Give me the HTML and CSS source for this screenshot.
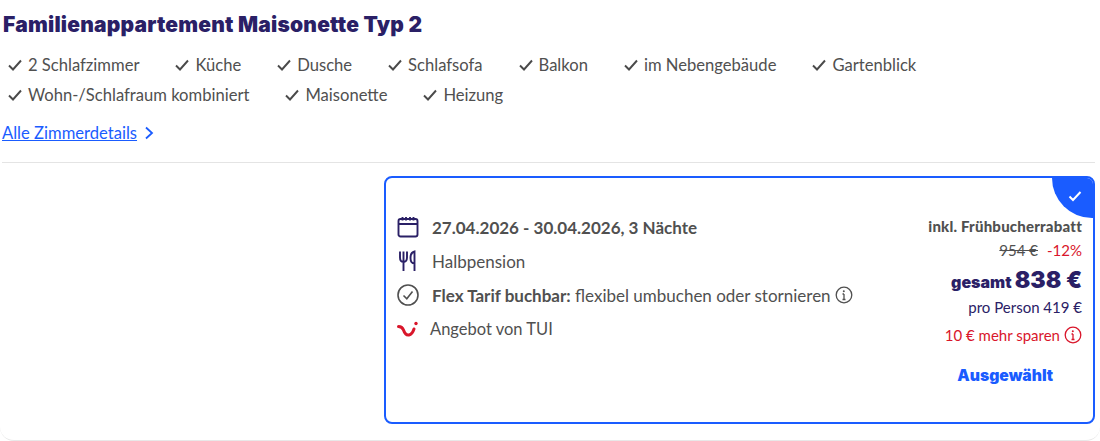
FILE: index.html
```html
<!DOCTYPE html>
<html lang="de">
<head>
  <meta charset="UTF-8" />
  <title>Familienappartement Maisonette Typ 2</title>
  <link rel="stylesheet" href="styles.css">
</head>
<body>
  <div class="room">
    <h2 class="room-title">Familienappartement Maisonette Typ 2</h2>

    <ul class="features">
      <li><svg viewBox="0 0 14 14"><path d="M1 7.500 5 11.500 13 2.500"/></svg>2 Schlafzimmer</li>
      <li><svg viewBox="0 0 14 14"><path d="M1 7.500 5 11.500 13 2.500"/></svg>Küche</li>
      <li><svg viewBox="0 0 14 14"><path d="M1 7.500 5 11.500 13 2.500"/></svg>Dusche</li>
      <li><svg viewBox="0 0 14 14"><path d="M1 7.500 5 11.500 13 2.500"/></svg>Schlafsofa</li>
      <li><svg viewBox="0 0 14 14"><path d="M1 7.500 5 11.500 13 2.500"/></svg>Balkon</li>
      <li><svg viewBox="0 0 14 14"><path d="M1 7.500 5 11.500 13 2.500"/></svg>im Nebengebäude</li>
      <li><svg viewBox="0 0 14 14"><path d="M1 7.500 5 11.500 13 2.500"/></svg>Gartenblick</li>
      <li><svg viewBox="0 0 14 14"><path d="M1 7.500 5 11.500 13 2.500"/></svg>Wohn-/Schlafraum kombiniert</li>
      <li><svg viewBox="0 0 14 14"><path d="M1 7.500 5 11.500 13 2.500"/></svg>Maisonette</li>
      <li><svg viewBox="0 0 14 14"><path d="M1 7.500 5 11.500 13 2.500"/></svg>Heizung</li>
    </ul>

    <div class="details">
      <a href="#">Alle Zimmerdetails</a>
      <svg class="chevron" viewBox="0 0 10 14"><path d="M2 1.500 8 7 2 12.500"/></svg>
    </div>

    <hr class="divider">

    <div class="offer-row">
      <div class="offer">
        <div class="corner">
          <svg viewBox="0 0 14 14"><path d="M1.500 7.500 5 11 12.500 3"/></svg>
        </div>

        <div class="offer-info">
          <div class="info-line">
            <svg class="info-icon navy" viewBox="0 0 22 22">
              <rect x="1.500" y="3" width="19" height="17.500" rx="2"/>
              <path d="M1.500 8h19M5.500 1v3.500M9 1v3.500M13 1v3.500M16.500 1v3.500"/>
            </svg>
            <strong>27.04.2026 - 30.04.2026, 3 Nächte</strong>
          </div>
          <div class="info-line">
            <svg class="info-icon navy" viewBox="0 0 22 22">
              <path d="M3 1.500v6c0 3 1.500 4.500 3.500 4.500S10 10.500 10 7.500v-6M6.500 1.500V21"/>
              <path d="M17.500 13.500c-2.500 0-4-1.500-4-5.500 0-4 1.500-6 4-6.500V21"/>
            </svg>
            <span>Halbpension</span>
          </div>
          <div class="info-line">
            <svg class="info-icon grey" viewBox="0 0 22 22">
              <circle cx="11" cy="11" r="10"/>
              <path d="M6.500 11.500 9.800 14.800 15.500 7.500"/>
            </svg>
            <span><strong>Flex Tarif buchbar:</strong> flexibel umbuchen oder stornieren</span>
            <svg class="info-dot" viewBox="0 0 18 18">
              <circle cx="9" cy="9" r="7.800"/>
              <path d="M9 8v5.500M7.500 8H9M7.500 13.500h3"/>
              <circle class="fill" cx="8.800" cy="5.200" r="1"/>
            </svg>
          </div>
          <div class="info-line tui">
            <svg class="tui-logo" viewBox="0 0 21 17">
              <path class="tui-smile" d="M1.500 5.500C4 5.500 5.500 6.500 6.500 9c1 3 3 5.500 5.500 5 2.500-.5 4-3 5-6"/>
              <circle class="tui-dot" cx="19" cy="2.500" r="1.700"/>
            </svg>
            <span>Angebot von TUI</span>
          </div>
        </div>

        <div class="price">
          <div class="price-note">inkl. Frühbucherrabatt</div>
          <div class="price-old"><s>954 €</s><span class="red">-12%</span></div>
          <div class="price-total"><span>gesamt</span> <b>838 €</b></div>
          <div class="price-person">pro Person 419 €</div>
          <div class="price-save">10 € mehr sparen
            <svg class="info-dot" viewBox="0 0 18 18">
              <circle cx="9" cy="9" r="7.800"/>
              <path d="M9 8v5.500M7.500 8H9M7.500 13.500h3"/>
              <circle class="fill" cx="8.800" cy="5.200" r="1"/>
            </svg>
          </div>
          <div class="selected">Ausgewählt</div>
        </div>
      </div>
    </div>
  </div>
</body>
</html>
```

FILE: styles.css
```css
body {
  font-family: "Lato", "Open Sans", sans-serif;
  background-color: #ffffff;
  color: #505050;
  margin: 0;
}

.room {
  box-sizing: border-box;
  height: 441px;
  padding: 12px 5px 0 2px;
  border-bottom: 1px solid #e8e8e8;
  border-radius: 0 0 14px 14px;
}

.room-title {
  margin: 0 0 0 1px;
  font-family: "Inter", sans-serif;
  font-size: 21px;
  line-height: 26px;
  font-weight: 900;
  letter-spacing: 0.200px;
  color: #2a2066;
}

.features {
  display: flex;
  flex-wrap: wrap;
  column-gap: 36px;
  margin: 12px 0 0 6px;
  padding: 0;
  list-style: none;
  font-size: 16.600px;
  line-height: 30px;
  max-width: 960px;
}

.features li {
  display: flex;
  align-items: center;
  gap: 6px;
}

.features svg {
  width: 14px;
  height: 14px;
  fill: none;
  stroke: #4a4a4a;
  stroke-width: 1.900;
}

.details {
  display: flex;
  align-items: center;
  gap: 7px;
  margin-top: 11px;
  font-size: 16.600px;
  line-height: 24px;
}

.details a {
  color: #1a5cff;
}

.chevron {
  width: 10px;
  height: 14px;
  fill: none;
  stroke: #1a5cff;
  stroke-width: 1.800;
}

.divider {
  height: 1px;
  margin: 17px 0 0;
  border: none;
  background-color: #e4e4e4;
}

.offer-row {
  display: flex;
  justify-content: flex-end;
  margin-top: 13px;
}

.offer {
  position: relative;
  box-sizing: border-box;
  display: flex;
  justify-content: space-between;
  width: 711px;
  height: 248px;
  padding: 32px 11px 0 11px;
  border: 2px solid #1a5cff;
  border-radius: 8px;
  overflow: hidden;
}

.corner {
  position: absolute;
  top: 0;
  right: 0;
  width: 41px;
  height: 40px;
  background-color: #1a5cff;
  border-bottom-left-radius: 40px;
}

.corner svg {
  position: absolute;
  top: 11px;
  right: 11px;
  width: 14px;
  height: 14px;
  fill: none;
  stroke: #ffffff;
  stroke-width: 2;
}

.offer-info {
  font-size: 17px;
}

.info-line {
  display: flex;
  align-items: center;
  height: 34px;
}

.info-line strong {
  font-weight: 700;
}

.info-icon {
  width: 22px;
  height: 22px;
  margin-right: 13px;
  fill: none;
  stroke-width: 1.600;
}

.navy {
  stroke: #2a2066;
  stroke-width: 1.900;
}

.grey {
  stroke: #505050;
}

.info-dot {
  width: 18px;
  height: 18px;
  margin-left: 4px;
  fill: none;
  stroke: currentColor;
  stroke-width: 1.300;
}

.info-dot .fill {
  fill: currentColor;
  stroke: none;
}

.tui {
  font-size: 16.500px;
}

.tui-logo {
  width: 21px;
  height: 17px;
  margin-right: 12px;
  fill: none;
}

.tui-smile {
  stroke: #d9162b;
  stroke-width: 3;
  stroke-linecap: round;
}

.tui-dot {
  fill: #d9162b;
}

.price {
  display: flex;
  flex-direction: column;
  align-items: flex-end;
  margin-top: 6px;
  font-size: 15px;
}

.price-note {
  font-size: 15px;
  font-weight: 900;
  letter-spacing: 0.200px;
  line-height: 24px;
  margin-top: -2px;
}

.price-old {
  display: flex;
  gap: 9px;
  line-height: 24px;
}

.red {
  color: #d9162b;
}

.price-total {
  margin-top: 2px;
  color: #2a2066;
  font-family: "Inter", sans-serif;
  font-weight: 900;
  line-height: 32px;
  font-size: 16px;
}

.price-total b {
  font-size: 23px;
  font-weight: 900;
}

.price-person {
  margin-top: -3px;
  color: #2a2066;
  line-height: 25px;
}

.price-save {
  display: flex;
  align-items: center;
  color: #d9162b;
  line-height: 26px;
  margin-top: 2px;
}

.selected {
  align-self: center;
  margin-top: 16px;
  font-family: "Inter", sans-serif;
  font-size: 15.700px;
  font-weight: 900;
  color: #1a5cff;
  line-height: 24px;
}
```
